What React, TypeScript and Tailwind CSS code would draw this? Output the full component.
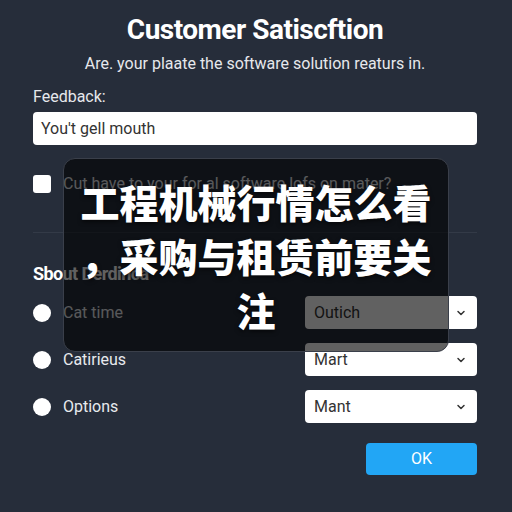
import React from "react";

function Chevron() {
  return (
    <svg width="12" height="12" viewBox="0 0 24 24" fill="none" stroke="#333" strokeWidth="3" strokeLinecap="round" strokeLinejoin="round">
      <path d="M6 9l6 6 6-6" />
    </svg>
  );
}

function Row({ label, value }: { label: string; value: string }) {
  return (
    <div className="flex items-center h-[33px]">
      <div className="w-[18px] h-[18px] rounded-full bg-white" />
      <span className="ml-[12px] text-[16px] text-[#e8eaee] flex-1">{label}</span>
      <div className="w-[172px] h-[33px] bg-white rounded-[4px] flex items-center justify-between pl-[9px] pr-[10px]">
        <span className="text-[16px] text-[#333]">{value}</span>
        <Chevron />
      </div>
    </div>
  );
}

export default function App() {
  return (
    <div
      className="relative w-[512px] h-[512px] overflow-hidden bg-[#262d3a] pl-[33px] pr-[35px]"
      style={{ fontFamily: "Roboto, 'Liberation Sans', sans-serif" }}
    >
      <div className="flex flex-col">
        <h1 className="mt-[13px] text-center text-[28px] leading-[34px] font-bold text-white tracking-[-0.5px]">
          Customer Satiscftion
        </h1>
        <p className="mt-[7px] text-center text-[16px] leading-[20px] text-[#e6e8ec]">
          Are. your plaate the software solution reaturs in.
        </p>
        <div className="mt-[13px] text-[16px] leading-[20px] text-[#e6e8ec]">Feedback:</div>
        <div className="mt-[5px] h-[33px] bg-white rounded-[4px] flex items-center px-[8px] text-[16px] text-[#333]">
          You't gell mouth
        </div>
        <div className="mt-[30px] flex items-center h-[18px]">
          <div className="w-[18px] h-[18px] rounded-[3px] bg-white" />
          <span className="ml-[12px] text-[16px] text-[#e8eaee]">Cut have to your for al software lofs on mater?</span>
        </div>
        <div className="mt-[39px] h-px bg-[#333a47]" />
        <div className="mt-[30px] text-[18px] leading-[22px] font-bold text-white tracking-[-0.6px]">Sbout Derdinca</div>
        <div className="mt-[11px] flex flex-col gap-[14px]">
          <Row label="Cat time" value="Outich" />
          <Row label="Catirieus" value="Mart" />
          <Row label="Options" value="Mant" />
        </div>
        <div className="mt-[20px] flex justify-end">
          <div className="w-[111px] h-[32px] rounded-[4px] bg-[#22a6f5] flex items-center justify-center text-[16px] text-white">
            OK
          </div>
        </div>
      </div>

      <div className="absolute left-[63px] top-[158px] w-[386px] h-[194px] rounded-[12px] bg-[rgba(0,0,0,0.62)] border border-[#3a3f4a] flex flex-col items-center justify-center text-center">
        <div
          className="text-[39px] leading-[54px] font-black text-white"
          style={{ fontFamily: "'Noto Sans CJK SC', sans-serif", textShadow: "0 2px 4px rgba(0,0,0,0.6)" }}
        >
          <div>工程机械行情怎么看</div>
          <div>，采购与租赁前要关</div>
          <div>注</div>
        </div>
      </div>
    </div>
  );
}
